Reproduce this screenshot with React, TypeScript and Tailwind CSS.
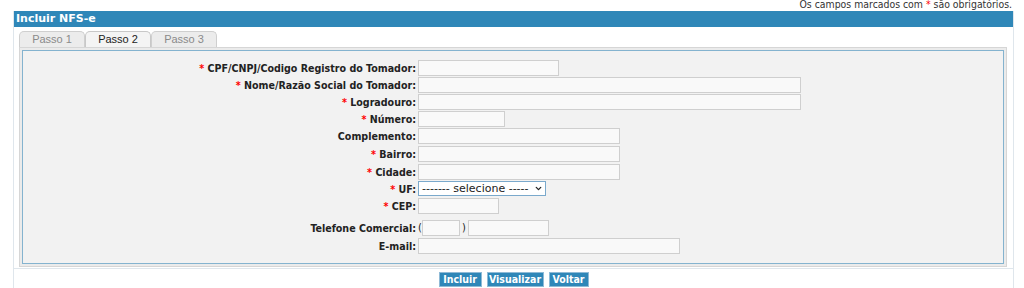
import { ChevronDown } from "lucide-react";

type Row = {
  label: string;
  required?: boolean;
  width: string;
  rowClass: string;
  kind?: "disabled" | "select" | "phone";
};

const rows: Row[] = [
  { label: "CPF/CNPJ/Codigo Registro do Tomador:", required: true, width: "w-[141px]", rowClass: "h-[17px]", kind: "disabled" },
  { label: "Nome/Razão Social do Tomador:", required: true, width: "w-[383px]", rowClass: "h-[17px]" },
  { label: "Logradouro:", required: true, width: "w-[383px]", rowClass: "h-[17px]" },
  { label: "Número:", required: true, width: "w-[87px]", rowClass: "h-[17px]" },
  { label: "Complemento:", width: "w-[202px]", rowClass: "h-[18px]" },
  { label: "Bairro:", required: true, width: "w-[202px]", rowClass: "h-[18px]" },
  { label: "Cidade:", required: true, width: "w-[202px]", rowClass: "h-[17px]" },
  { label: "UF:", required: true, width: "w-[128px]", rowClass: "h-[17px]", kind: "select" },
  { label: "CEP:", required: true, width: "w-[81px]", rowClass: "h-[22px]" },
  { label: "Telefone Comercial:", width: "w-[81px]", rowClass: "h-[18px]", kind: "phone" },
  { label: "E-mail:", width: "w-[262px]", rowClass: "h-[17px]" },
];

const buttons = [
  { label: "Incluir", w: "w-[43px]" },
  { label: "Visualizar", w: "w-[57px]" },
  { label: "Voltar", w: "w-[40px]" },
];

const inputCls = "h-[16px] border border-[#cfcfcf] bg-[#f9f9f9] outline-none";

export default function App() {
  return (
    <div className="h-[288px] w-[1024px] overflow-hidden bg-white font-['DejaVu_Sans_Condensed','Liberation_Sans',sans-serif] text-[11px] text-[#222]">
      <div className="h-[11px] pr-[12px] text-right text-[10.4px] leading-[8px] text-[#333]">
        Os campos marcados com <span className="text-[#f00]">*</span> são obrigatórios.
      </div>

      <div className="ml-[13px] w-[1001px] border-x border-[#dfe6ec]">
        <div className="h-[16px] bg-[#2f87b8] pl-[2px] font-['DejaVu_Sans',Verdana,sans-serif] font-bold leading-[16px] text-white">
          Incluir NFS-e
        </div>

        <div className="pl-[5px] pr-[6px] pt-[4px]">
          <div className="flex h-[16px] font-['Liberation_Sans',Arial,sans-serif]">
            {["Passo 1", "Passo 2", "Passo 3"].map((t, i) => (
              <div
                key={t}
                className={
                  i === 1
                    ? "flex w-[66px] items-center justify-center rounded-t-[5px] border border-b-0 border-[#c8c8c8] bg-[#f4f4f4] text-[#222]"
                    : "flex w-[66px] items-center justify-center rounded-t-[5px] border border-b-0 border-[#cfcfcf] bg-[#ececec] text-[#8a8a8a]"
                }
              >
                {t}
              </div>
            ))}
          </div>

          <div className="h-[220px] border border-[#d6d6d6] bg-[#ebebeb] p-[2px]">
            <div className="h-full border border-[#84b3cf] bg-[#f2f2f2] pt-[9px]">
              {rows.map((r) => (
                <div key={r.label} className={`flex items-start ${r.rowClass}`}>
                  <div className="w-[393px] text-right text-[10.6px] font-bold leading-[16px]">
                    {r.required && <span className="text-[#f00]">* </span>}
                    {r.label}
                  </div>
                  <div className="ml-[2px] flex items-start">
                    {r.kind === "disabled" && (
                      <input disabled className={`${inputCls} ${r.width} bg-[#eeeeee]`} />
                    )}
                    {r.kind === "select" && (
                      <div className={`relative ${r.width}`}>
                        <select className="h-[15px] w-full appearance-none border border-[#7aa9cc] bg-white pl-[3px] font-['DejaVu_Sans',Verdana,sans-serif] text-[11px] leading-[13px] text-[#222] outline-none">
                          <option>------- selecione -----</option>
                        </select>
                        <ChevronDown
                          className="pointer-events-none absolute right-[3px] top-[3px] h-[9px] w-[9px] text-[#222]"
                          strokeWidth={3.5}
                        />
                      </div>
                    )}
                    {r.kind === "phone" && (
                      <>
                        <span className="leading-[16px]">(</span>
                        <input className={`${inputCls} w-[38px]`} />
                        <span className="mx-[2px] leading-[16px]">)</span>
                        <input className={`${inputCls} ${r.width}`} />
                      </>
                    )}
                    {!r.kind && <input className={`${inputCls} ${r.width}`} />}
                  </div>
                </div>
              ))}
            </div>
          </div>
        </div>

        <div className="mt-[1px] flex h-[21px] justify-center gap-[5px] border-t border-[#dfe6ec] pt-[3px]">
          {buttons.map((b) => (
            <button
              key={b.label}
              className={`h-[15px] ${b.w} border border-[#8fbad6] bg-[#2f87b8] text-center text-[10.5px] font-bold leading-[13px] text-white`}
            >
              {b.label}
            </button>
          ))}
        </div>
      </div>
    </div>
  );
}
